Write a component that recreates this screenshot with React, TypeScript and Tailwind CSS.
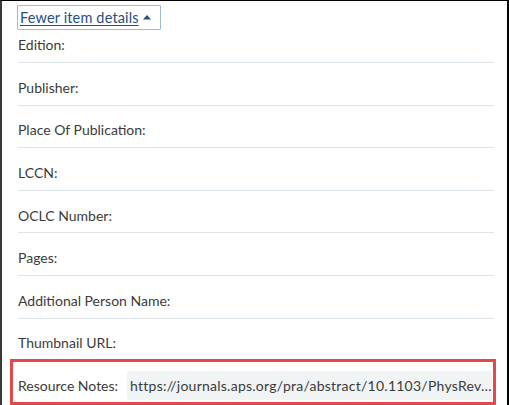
const fields = [
  'Publisher:',
  'Place Of Publication:',
  'LCCN:',
  'OCLC Number:',
  'Pages:',
  'Additional Person Name:',
  'Thumbnail URL:',
];

export default function App() {
  return (
    <div
      className="relative w-[509px] h-[405px] overflow-hidden bg-white border-t border-t-black border-l-2 border-l-[#3a3a3a] border-r-2 border-r-black text-[14px] text-[#3b3b3b]"
      style={{ fontFamily: 'Lato, "Open Sans", sans-serif' }}
    >
      <div className="pl-4 pr-[13px] pt-[4px]">
        <button className="flex items-center h-[25px] -ml-px pl-[2px] pr-[8px] border border-[#9dbbdc] rounded-[1px] text-[#27507f] text-[14.5px] leading-5">
          <span className="underline underline-offset-2 tracking-[0.15px]">Fewer item details</span>
          <svg width="10" height="8" viewBox="0 0 10 8" className="ml-[3px] mt-[-1px]">
            <path d="M1 6.5 L5 2 L9 6.5 Z" fill="#27507f" />
          </svg>
        </button>

        <div className="pt-[5px] pb-[7px] leading-5 border-b border-[#dde5ea]">Edition:</div>
        {fields.map((f) => (
          <div key={f} className="pt-[14.8px] pb-[6.8px] leading-5 border-b border-[#dde5ea]">
            {f}
          </div>
        ))}

        <div className="relative flex items-center gap-[9px] pt-[10px] pb-[4px]">
          <span className="leading-5 shrink-0">Resource Notes:</span>
          <div className="flex-1 min-w-0 h-[29px] flex items-center px-[3px] rounded-[3px] bg-[#f1f4f5] mr-[2px] overflow-hidden">
            <span className="whitespace-nowrap leading-5 tracking-[0.25px]">
              https://journals.aps.org/pra/abstract/10.1103/PhysRev…
            </span>
          </div>
          <div className="absolute left-[-8px] right-[-2px] top-[-2px] h-[46px] border-[3px] border-[#e5484a] pointer-events-none" />
        </div>
      </div>
    </div>
  );
}
